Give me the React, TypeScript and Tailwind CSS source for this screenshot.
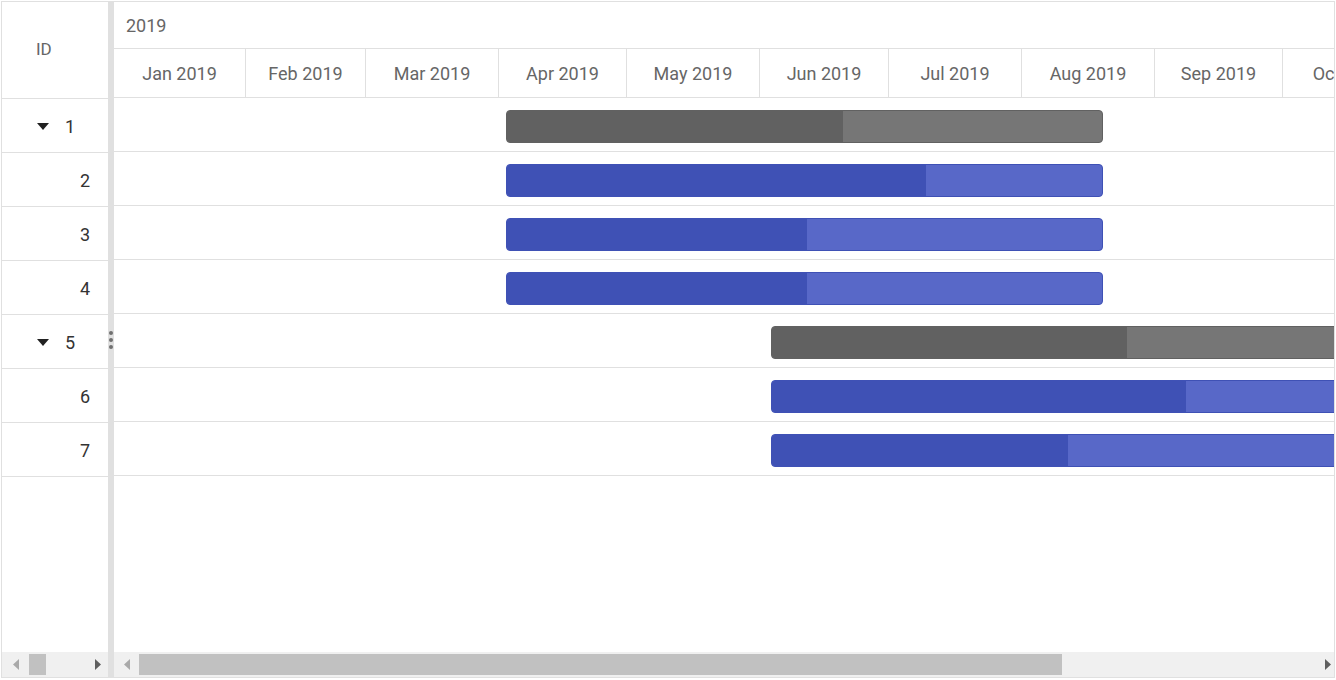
import React from 'react';

interface Task {
  id: number;
  parent: boolean;
  offset: number;
  width: number;
  progress: number;
}

const months = [
  { label: 'Jan 2019', width: 132 },
  { label: 'Feb 2019', width: 120 },
  { label: 'Mar 2019', width: 133 },
  { label: 'Apr 2019', width: 128 },
  { label: 'May 2019', width: 133 },
  { label: 'Jun 2019', width: 129 },
  { label: 'Jul 2019', width: 133 },
  { label: 'Aug 2019', width: 133 },
  { label: 'Sep 2019', width: 128 },
  { label: 'Oct 2019', width: 133 },
];

// offsets and widths are in timeline pixels from Jan 1
const tasks: Task[] = [
  { id: 1, parent: true, offset: 392, width: 597, progress: 336 },
  { id: 2, parent: false, offset: 392, width: 597, progress: 419 },
  { id: 3, parent: false, offset: 392, width: 597, progress: 300 },
  { id: 4, parent: false, offset: 392, width: 597, progress: 300 },
  { id: 5, parent: true, offset: 657, width: 700, progress: 355 },
  { id: 6, parent: false, offset: 657, width: 700, progress: 414 },
  { id: 7, parent: false, offset: 657, width: 700, progress: 296 },
];

const CaretDown = () => (
  <svg width="12" height="7" viewBox="0 0 12 7">
    <path d="M0 0 L12 0 L6 7 Z" fill="#212121" />
  </svg>
);

const Arrow = ({ dir, dark }: { dir: 'left' | 'right'; dark: boolean }) => (
  <svg width="6" height="11" viewBox="0 0 6 11">
    <path d={dir === 'left' ? 'M6 0 L0 5.5 L6 11 Z' : 'M0 0 L6 5.5 L0 11 Z'} fill={dark ? '#5f5f5f' : '#a9a9a9'} />
  </svg>
);

const TaskBar: React.FC<{ task: Task }> = ({ task }) => {
  const dark = task.parent ? 'bg-[#616161]' : 'bg-[#3f51b5]';
  const light = task.parent ? 'bg-[#767676] border-[#616161]' : 'bg-[#5868c8] border-[#3f51b5]';
  return (
    <div
      className={`h-[33px] mt-[3px] shrink-0 rounded-[4px] border overflow-hidden flex ${light}`}
      style={{ marginLeft: task.offset, width: task.width }}
    >
      <div className={`h-full ${dark}`} style={{ width: task.progress }} />
    </div>
  );
};

export default function App() {
  return (
    <div className="w-[1336px] h-[680px] bg-white pt-px pl-px font-['Roboto',sans-serif]">
      <div className="w-[1334px] h-[677px] border border-[#e0e0e0] flex overflow-hidden">
        {/* tree grid */}
        <div className="w-[106px] shrink-0 flex flex-col">
          <div className="h-[97px] shrink-0 border-b border-[#e0e0e0] flex items-center pl-[34px] text-[17px] text-[#666666]">
            ID
          </div>
          {tasks.map((t) => (
            <div
              key={t.id}
              className={`h-[54px] shrink-0 border-b border-[#e0e0e0] flex items-center justify-end pt-[2px] text-[18px] text-[#333333] ${t.parent ? 'pr-[33px]' : 'pr-[18px]'}`}
            >
              {t.parent && (
                <span className="mr-[16px] flex items-center">
                  <CaretDown />
                </span>
              )}
              <span>{t.id}</span>
            </div>
          ))}
          <div className="flex-1" />
          <div className="h-[25px] bg-[#f0f0f0] flex items-center shrink-0">
            <span className="ml-[11px] flex"><Arrow dir="left" dark={false} /></span>
            <div className="ml-[10px] w-[17px] h-[21px] bg-[#c1c1c1]" />
            <div className="flex-1" />
            <span className="mr-[7px] flex"><Arrow dir="right" dark /></span>
          </div>
        </div>

        {/* splitter with resize grip */}
        <div className="w-[6px] shrink-0 bg-[#e0e0e0] flex flex-col items-center justify-center gap-[3px]">
          <div className="w-[4px] h-[4px] rounded-full bg-[#707070]" />
          <div className="w-[4px] h-[4px] rounded-full bg-[#707070]" />
          <div className="w-[4px] h-[4px] rounded-full bg-[#707070]" />
        </div>

        {/* timeline chart */}
        <div className="flex-1 min-w-0 flex flex-col overflow-hidden">
          <div className="h-[47px] border-b border-[#e0e0e0] flex items-center pl-[12px] text-[18px] text-[#666666] shrink-0">
            2019
          </div>
          <div className="h-[49px] border-b border-[#e0e0e0] flex shrink-0">
            {months.map((m) => (
              <div
                key={m.label}
                className="h-full shrink-0 border-r border-[#e0e0e0] flex items-center justify-center text-[18px] text-[#666666] whitespace-nowrap"
                style={{ width: m.width }}
              >
                {m.label}
              </div>
            ))}
          </div>
          {tasks.map((t) => (
            <div key={t.id} className="h-[54px] border-b border-[#e0e0e0] flex items-center shrink-0">
              <TaskBar task={t} />
            </div>
          ))}
          <div className="flex-1" />
          <div className="h-[25px] bg-[#f0f0f0] flex items-center shrink-0">
            <span className="ml-[10px] flex"><Arrow dir="left" dark={false} /></span>
            <div className="ml-[9px] w-[923px] h-[21px] bg-[#c1c1c1]" />
            <div className="flex-1" />
            <span className="mr-[3px] flex"><Arrow dir="right" dark /></span>
          </div>
        </div>
      </div>
    </div>
  );
}
